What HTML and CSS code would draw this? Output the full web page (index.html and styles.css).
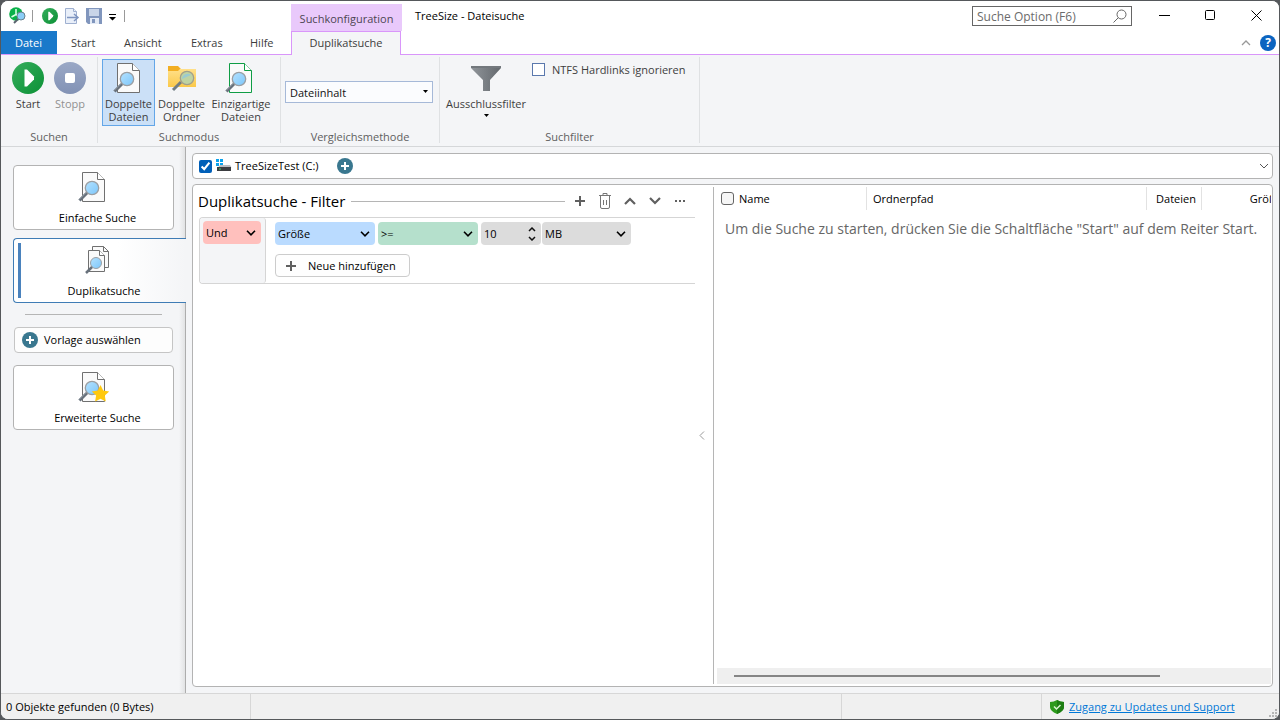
FILE: index.html
```html
<!DOCTYPE html>
<html lang="de">
<head>
<meta charset="utf-8">
<title>TreeSize - Dateisuche</title>
<link rel="stylesheet" href="styles.css">
</head>
<body>
<svg class="defs" aria-hidden="true">
  <defs>
    <linearGradient id="green" x1="0" y1="0" x2="1" y2="1"><stop offset="0" stop-color="#35ad5c"/><stop offset="1" stop-color="#0c9136"/></linearGradient>
    <linearGradient id="slate" x1="0" y1="0" x2="0" y2="1"><stop offset="0" stop-color="#9aa8c6"/><stop offset="1" stop-color="#8292b5"/></linearGradient>
    <linearGradient id="lens" x1="0" y1="0" x2="1" y2="1"><stop offset="0" stop-color="#b4e2ff"/><stop offset="1" stop-color="#7cc6fa"/></linearGradient>
    <linearGradient id="folder" x1="0" y1="0" x2="0" y2="1"><stop offset="0" stop-color="#ffe08a"/><stop offset="1" stop-color="#fbc94a"/></linearGradient>
    <linearGradient id="steel" x1="0" y1="0" x2="1" y2="0"><stop offset="0" stop-color="#90959a"/><stop offset="1" stop-color="#63686d"/></linearGradient>
    <symbol id="play" viewBox="0 0 32 32"><circle cx="16" cy="16" r="16" fill="url(#green)"/><path d="M12.500 7.500h2.500l7 7v3l-7 7h-2.500z" fill="#fff"/></symbol>
    <symbol id="glass" viewBox="0 0 28 32"><path d="M9.500 21.500 1.500 29.500" stroke="#68717b" stroke-width="3"/><path d="M7.500 22 1 28.500" stroke="#9aa3ad" stroke-width="1"/><circle cx="14" cy="17" r="6.700" fill="url(#lens)" stroke="#9b9fa3" stroke-width="1.300"/></symbol>
    <symbol id="page" viewBox="0 0 28 32"><path d="M4.500 1.500h15l7 7v22h-22z" fill="#fafafa" stroke="currentColor"/><path d="M19.500 1.500v7h7" fill="#fff" stroke="currentColor"/></symbol>
    <symbol id="docsearch" viewBox="0 0 28 32"><use href="#page"/><use href="#glass"/></symbol>
    <symbol id="plusdisc" viewBox="0 0 16 16"><circle cx="8" cy="8" r="8" fill="#39778f"/><path d="M8 4v8M4 8h8" stroke="#fff" stroke-width="2"/></symbol>
    <symbol id="chev" viewBox="0 0 10 6"><path d="m1 .8 4 4 4-4" fill="none" stroke="currentColor" stroke-width="1.600"/></symbol>
  </defs>
</svg>
<div class="window">
  <header class="top">
    <div class="quick">
      <svg class="logo" viewBox="0 0 18 18"><circle cx="7" cy="7" r="6.800" fill="#0bb14a"/><path d="M7 2v5.500L2.500 10M7 7.500l3 2" stroke="#d9ffe5" stroke-width="1.600" fill="none"/><path d="m9 12-4 4" stroke="#59636d" stroke-width="2"/><circle cx="12" cy="9" r="4" fill="#8bcdf7" stroke="#69818e"/></svg>
      <i class="bar"></i>
      <button class="icon" aria-label="Suche starten"><svg width="16" height="16"><use href="#play"/></svg></button>
      <button class="icon" aria-label="Exportieren"><svg width="16" height="16" viewBox="0 0 16 16" fill="#e9eff9" stroke="#9fb0d0"><path d="M1.500.5h8l3 3v12h-11z"/><path d="M9.500.5v3h3" /><path d="M3 9.500h10M10 6l4 3.500-4 3.500" fill="none" stroke="#7f95c0" stroke-width="1.500"/></svg></button>
      <button class="icon" aria-label="Speichern"><svg width="16" height="16" viewBox="0 0 16 16"><path d="M0 0h16v16H2l-2-2z" fill="#8196bd"/><path d="M3 1h10v7H3z" fill="#c9d5e8"/><path d="M4 10h9v6H4z" fill="#e4ebf6"/><path d="M6 11h3v4H6z" fill="#8196bd"/></svg></button>
      <button class="icon menu" aria-label="Symbolleiste anpassen"><svg width="7" height="7" viewBox="0 0 7 7"><path d="M0 0h7v1H0zM0 3h7L3.500 6.500z"/></svg></button>
      <i class="bar"></i>
    </div>
    <div class="context">Suchkonfiguration</div>
    <h1>TreeSize - Dateisuche</h1>
    <label class="option"><input type="text" placeholder="Suche Option (F6)" aria-label="Suche Option"><svg width="14" height="14" viewBox="0 0 14 14" fill="none" stroke="#666"><circle cx="8.500" cy="5.500" r="4.500"/><path d="M5.300 8.700.5 13.500"/></svg></label>
    <div class="caption">
      <button class="icon" aria-label="Minimieren"><svg width="11" height="11"><path d="M0 5.500h11" stroke="#000"/></svg></button>
      <button class="icon" aria-label="Maximieren"><svg width="11" height="11"><rect x=".5" y=".5" width="9" height="9" rx="1" fill="none" stroke="#000"/></svg></button>
      <button class="icon" aria-label="Schließen"><svg width="11" height="11"><path d="m.5.5 10 10m0-10-10 10" stroke="#000"/></svg></button>
    </div>
  </header>
  <nav class="tabs">
    <button class="file">Datei</button><button>Start</button><button>Ansicht</button><button>Extras</button><button>Hilfe</button><button class="current">Duplikatsuche</button>
    <div class="help"><button class="icon" aria-label="Menüband reduzieren"><svg width="10" height="6" viewBox="0 0 10 6"><path d="m1 5 4-4 4 4" fill="none" stroke="#999" stroke-width="1.300"/></svg></button><button class="question" aria-label="Hilfe">?</button></div>
  </nav>
  <section class="ribbon">
    <div class="group searching">
      <div class="tools">
        <button class="tool"><svg width="32" height="32"><use href="#play"/></svg>Start</button>
        <button class="tool" disabled><svg width="32" height="32"><circle cx="16" cy="16" r="16" fill="url(#slate)"/><rect x="11" y="11" width="10" height="10" rx="2" fill="#fff"/></svg>Stopp</button>
      </div>
      <h2>Suchen</h2>
    </div>
    <div class="group mode">
      <div class="tools">
        <button class="tool selected"><svg class="doc" width="28" height="32"><use href="#docsearch"/></svg>Doppelte<br>Dateien</button>
        <button class="tool"><svg width="32" height="32" viewBox="0 0 32 32"><path d="M2 4h10l3 3h15v18H2z" fill="#f2ae22"/><path d="M2 9h10l2-2h16v18H2z" fill="url(#folder)"/><path d="m15 20-8 8" stroke="#727d82" stroke-width="3"/><circle cx="21" cy="16" r="6.700" fill="#bfd3a2" stroke="#a1a08c" stroke-width="1.300"/><path d="M16 17a5.500 5.500 0 0 1 9-4z" fill="#9bcbd0"/></svg>Doppelte<br>Ordner</button>
        <button class="tool"><svg class="doc unique" width="28" height="32"><use href="#docsearch"/></svg>Einzigartige<br>Dateien</button>
      </div>
      <h2>Suchmodus</h2>
    </div>
    <div class="group method">
      <div class="pick"><select aria-label="Vergleichsmethode"><option>Dateiinhalt</option></select><svg width="5" height="3"><path d="M0 0h5L2.500 3z"/></svg></div>
      <h2>Vergleichsmethode</h2>
    </div>
    <div class="group filters">
      <div class="tools">
        <button class="tool"><svg width="32" height="32" viewBox="0 0 32 32"><path d="M1 4h30v2L20 18v11h-7V18L1 6z" fill="url(#steel)"/><path d="M1 4h30v2H1z" fill="#73787d"/></svg>Ausschlussfilter<svg class="down" width="5" height="3"><path d="M0 0h5L2.500 3z"/></svg></button>
        <label class="links"><input type="checkbox">NTFS Hardlinks ignorieren</label>
      </div>
      <h2>Suchfilter</h2>
    </div>
  </section>
  <div class="body">
    <aside>
      <button class="card"><svg class="doc" width="28" height="32"><use href="#docsearch"/></svg>Einfache Suche</button>
      <button class="card active"><svg class="doc" width="28" height="32" viewBox="0 0 28 32"><path d="M8.500 2.500h11l5 5v16h-16z" fill="#fafafa" stroke="currentColor"/><path d="M19.500 2.500v5h5" fill="none" stroke="currentColor"/><path d="M4.500 6.500h11l5 5v16h-16z" fill="#fafafa" stroke="currentColor"/><path d="M15.500 6.500v5h5" fill="#fff" stroke="currentColor"/><path d="m9 22-7 7" stroke="#68717b" stroke-width="2.500"/><circle cx="12" cy="19" r="5.500" fill="url(#lens)" stroke="#9b9fa3"/></svg>Duplikatsuche</button>
      <hr>
      <button class="template"><svg width="16" height="16"><use href="#plusdisc"/></svg>Vorlage auswählen</button>
      <button class="card"><svg class="doc starred" width="32" height="32" viewBox="0 0 32 32"><use href="#docsearch" width="28" height="32"/><path d="m22.500 14 2.700 5.500 6 .9-4.400 4.200 1 6-5.300-2.800-5.400 2.800 1-6-4.300-4.200 6-.9z" fill="#ffc90e"/></svg>Erweiterte Suche</button>
    </aside>
    <main>
      <div class="scope">
        <label><input type="checkbox" checked><svg width="16" height="14" viewBox="0 0 16 14"><path d="M0 0h3v3H0zM4 0h3v3H4zM0 4h3v3H0zM4 4h3v3H4z" fill="#0aa2ec"/><path d="M2 8.500 4 6h10l1.500 2.500z" fill="#b9bcc0"/><path d="M1 8h14v4H1z" fill="#3b3d40"/><path d="M3 10h2" stroke="#3fd36a"/></svg>TreeSizeTest (C:)</label>
        <button class="icon" aria-label="Pfad hinzufügen"><svg width="16" height="16"><use href="#plusdisc"/></svg></button>
        <button class="icon expand" aria-label="Pfade anzeigen"><svg width="10" height="6" viewBox="0 0 10 6"><path d="m1 1 4 4 4-4" fill="none" stroke="#555"/></svg></button>
      </div>
      <div class="panel">
        <section class="criteria">
          <div class="heading">
            <h3>Duplikatsuche - Filter</h3><i class="line"></i>
            <button class="icon" aria-label="Hinzufügen"><svg width="10" height="10"><path d="M5 0v10M0 5h10" stroke="#606060" stroke-width="2"/></svg></button>
            <button class="icon" aria-label="Löschen"><svg width="12" height="16" viewBox="0 0 12 16" fill="none" stroke="#777"><path d="M0 2.500h12M4 2V.5h4V2M1.500 3v11q0 1.500 1.500 1.500h6q1.500 0 1.500-1.500V3M4.500 7v5M7.500 7v5"/></svg></button>
            <button class="icon" aria-label="Nach oben"><svg width="12" height="8"><path d="m1 7 5-5 5 5" fill="none" stroke="#606060" stroke-width="2.200"/></svg></button>
            <button class="icon" aria-label="Nach unten"><svg width="12" height="8"><path d="m1 1 5 5 5-5" fill="none" stroke="#606060" stroke-width="2.200"/></svg></button>
            <button class="icon" aria-label="Mehr"><svg width="10" height="2"><path d="M0 0h2v2H0zM4 0h2v2H4zM8 0h2v2H8z" fill="#606060"/></svg></button>
          </div>
          <div class="rules">
            <div class="joiner"><div class="chip red"><select aria-label="Verknüpfung"><option>Und</option></select><svg width="10" height="6"><use href="#chev"/></svg></div></div>
            <div class="conditions">
              <div class="row">
                <div class="chip blue"><select aria-label="Eigenschaft"><option>Größe</option></select><svg width="10" height="6"><use href="#chev"/></svg></div>
                <div class="chip green"><select aria-label="Vergleich"><option>&gt;=</option></select><svg width="10" height="6"><use href="#chev"/></svg></div>
                <div class="chip number"><input type="text" inputmode="numeric" value="10" aria-label="Wert"><svg width="8" height="14" viewBox="0 0 8 14"><path d="m1 4 3-3 3 3M1 10l3 3 3-3" fill="none" stroke="#111" stroke-width="1.500"/></svg></div>
                <div class="chip unit"><select aria-label="Einheit"><option>MB</option></select><svg width="10" height="6"><use href="#chev"/></svg></div>
              </div>
              <button class="add"><svg width="10" height="10"><path d="M5 0v10M0 5h10" stroke="#606060" stroke-width="2"/></svg>Neue hinzufügen</button>
            </div>
          </div>
        </section>
        <button class="icon collapse" aria-label="Filter einklappen"><svg width="6" height="9"><path d="M5 .5 1 4.500l4 4" fill="none" stroke="#999"/></svg></button>
        <section class="results">
          <table>
            <colgroup><col class="c-name"><col><col class="c-files"><col class="c-size"></colgroup>
            <thead><tr><th><label><input type="checkbox">Name</label></th><th>Ordnerpfad</th><th class="num">Dateien</th><th class="num">Größe</th></tr></thead>
          </table>
          <p>Um die Suche zu starten, drücken Sie die Schaltfläche "Start" auf dem Reiter Start.</p>
          <div class="scroll"><i></i></div>
        </section>
      </div>
    </main>
  </div>
  <footer>
    <span class="count">0 Objekte gefunden (0 Bytes)</span><span class="space"></span>
    <span class="support"><svg width="14" height="14" viewBox="0 0 14 14"><path d="M7 0q3 2 7 2v5q0 4-7 7-7-3-7-7V2q4 0 7-2z" fill="#2d9a1c"/><path d="M7 0q3 2 7 2v5q0 4-7 7z" fill="#1d7d12"/><path d="m4 6.500 2.500 2.500L10.500 5" fill="none" stroke="#d9f4d2" stroke-width="1.500"/></svg><a href="#">Zugang zu Updates und Support</a></span>
    <svg class="grip" width="9" height="9"><path d="M6 0h2v2H6zM3 3h2v2H3zM6 3h2v2H6zM0 6h2v2H0zM3 6h2v2H3zM6 6h2v2H6z" fill="#b5b5b5"/></svg>
  </footer>
</div>
</body>
</html>
```
FILE: styles.css
```css
* { box-sizing: border-box; }
body { margin: 0; background: #55585b; font: 11px/13px "Open Sans", "Noto Sans", sans-serif; color: #000; }
button, input, select { font: inherit; color: inherit; margin: 0; }
button { padding: 0; border: 0; background: none; white-space: nowrap; }
svg { flex: none; display: block; }
h1, h2, h3, p { margin: 0; font-weight: normal; }
.defs { position: absolute; width: 0; height: 0; }
.icon { display: flex; align-items: center; justify-content: center; }
.window { display: flex; flex-direction: column; height: 100vh; border: 1px solid #55585b; border-radius: 8px; background: #f4f5f7; overflow: hidden; }

.top { display: flex; height: 30px; background: #fff; }
.quick { display: flex; align-items: center; width: 290px; padding-left: 8px; }
.logo { width: 18px; height: 18px; margin-right: 5px; }
.bar { width: 1px; height: 12px; background: #999; }
.quick .icon { margin-left: 6px; }
.quick .bar + .icon { margin-left: 9px; }
.quick .menu { margin-left: 7px; padding-top: 2px; }
.quick .menu + .bar { margin-left: 8px; }
.context { width: 111px; margin-top: 3px; padding-top: 8px; background: #e9c9fb; color: #4c4652; text-align: center; }
h1 { margin-left: 13px; font-size: 11px; line-height: 30px; }
.option { display: flex; align-items: center; align-self: flex-start; width: 160px; height: 20px; margin: 5px 9px 0 auto; padding: 0 4px; border: 1px solid #666; }
.option input { flex: 1; min-width: 0; padding: 0; border: 0; outline: 0; font-size: 12px; }
.option input::placeholder { color: #6b6b6b; opacity: 1; }
.caption { display: flex; }
.caption .icon { width: 46px; height: 29px; }

.tabs { display: flex; height: 24px; background: #fff; border-bottom: 1px solid #d996fa; color: #3c3c3c; }
.tabs > button { padding: 0 0 0 14px; text-align: left; }
.tabs > .file { width: 56px; background: #1979ca; color: #fff; }
.tabs > button:nth-child(2) { width: 53px; }
.tabs > button:nth-child(3) { width: 67px; }
.tabs > button:nth-child(4) { width: 59px; }
.tabs > button:nth-child(5) { width: 55px; }
.tabs > .current { width: 110px; height: 24px; padding: 0 0 2px; border: 1px solid #d996fa; border-bottom: 0; background: #f4f5f7; text-align: center; }
.help { display: flex; align-items: center; gap: 9px; margin-left: auto; padding-right: 3px; }
.question { width: 16px; height: 16px; border-radius: 50%; background: #0b64c0; color: #fff; font-size: 12px; font-weight: bold; line-height: 16px; }

.ribbon { display: flex; flex: none; height: 92px; padding: 2px 0 3px; border-bottom: 1px solid #d5d7d9; color: #3e3e3e; }
.group { display: flex; flex-direction: column; border-right: 1px solid #dfe1e3; }
.group h2 { margin-top: auto; font-size: 11px; line-height: 13px; text-align: center; color: #606060; }
.searching { width: 97px; }
.mode { width: 183px; }
.method { width: 159px; }
.filters { width: 260px; }
.tools { display: flex; }
.tool { display: flex; flex-direction: column; align-items: center; height: 67px; margin-top: 2px; padding-top: 2px; border: 1px solid transparent; }
.tool svg { margin-bottom: 3px; }
.searching .tool { width: 42px; }
.searching .tools { padding-left: 6px; }
.tool:disabled { color: #919191; }
.mode .tools { padding-left: 4px; }
.mode .tool { width: 53px; }
.mode .tool:last-child { width: 66px; }
.mode .selected { border-color: #63a6e8; background: #cbe0f7; }
.tool .doc { margin-right: 4px; }
.doc { color: #707070; }
.tool .unique { color: #0f9d45; }
.pick { position: relative; display: flex; margin: 24px 6px 0 4px; }
.pick select { flex: 1; height: 22px; padding: 0 4px; appearance: none; border: 1px solid #a6b9d8; border-radius: 0; background: #fbfcfe; color: #111; }
.pick svg { position: absolute; right: 5px; top: 9px; pointer-events: none; }
.filters .tool { width: 92px; }
.filters .tool .down { margin-top: 4px; }
.links { display: flex; align-items: center; align-self: flex-start; gap: 7px; margin-top: 6px; white-space: nowrap; }
.links input { width: 13px; height: 13px; appearance: none; border: 1px solid #5a78ad; background: #fff; }

.body { display: flex; flex: 1; min-height: 0; line-height: 16px; }
aside { display: flex; flex: none; flex-direction: column; width: 185px; padding: 18px 11px 0 12px; border-right: 1px solid #adadad; background: linear-gradient(to left, #e2e3e4, #f4f5f7 6px); }
.card { display: flex; flex: none; flex-direction: column; align-items: center; justify-content: center; gap: 7px; height: 65px; margin-bottom: 8px; padding: 2px 0 0 8px; border: 1px solid #b3b3b3; border-radius: 4px; background: #fff; }
.card svg { margin-right: 12px; }
.card .starred { margin-right: 8px; }
.active { margin-right: -12px; border-color: #3f7cb5; border-right: 0; border-radius: 4px 0 0 4px; background: linear-gradient(#4a82bd, #4a82bd) 4px 4px / 3px 55px no-repeat, linear-gradient(to right, #fff 60%, #f4f5f7); }
hr { width: 137px; margin: 3px 0 12px 12px; border: 0; border-top: 1px solid #b5b5b5; }
.template { display: flex; flex: none; align-items: center; gap: 6px; height: 26px; margin: 0 1px 12px; padding-left: 7px; border: 1px solid #c5c5c5; border-radius: 4px; background: #fdfdfd; }
main { display: flex; flex: 1; flex-direction: column; gap: 5px; min-width: 0; padding: 6px 6px; }
.scope, .panel { border: 1px solid #b3b3b3; border-radius: 4px; background: #fff; }
.scope { display: flex; flex: none; align-items: center; height: 26px; padding: 0 3px 0 6px; }
.scope label { display: flex; align-items: center; }
.scope input { width: 13px; height: 13px; margin-right: 4px; accent-color: #005fb8; }
.scope label svg { margin-right: 3px; }
.scope .icon { margin-left: 18px; }
.scope .expand { margin-left: auto; }

.panel { display: flex; flex: 1; min-height: 0; padding: 2px 1px; overflow: hidden; }
.criteria { flex: none; width: 501px; padding-left: 4px; }
.heading { display: flex; align-items: center; height: 30px; padding-bottom: 2px; }
.heading h3 { font-size: 15px; line-height: 20px; white-space: nowrap; }
.line { flex: 1; height: 1px; margin: 0 2px 0 6px; background: #b5b5b5; }
.heading .icon { width: 25px; height: 24px; }
.heading .icon:last-child { margin-right: 3px; }
.rules { display: flex; height: 67px; margin-left: 1px; border: 1px solid #d5d5d5; border-right: 0; border-radius: 4px 0 0 4px; }
.joiner { width: 66px; padding: 3px; border-right: 1px solid #d5d5d5; border-radius: 3px; background: #f4f5f7; }
.conditions { padding: 4px 9px; }
.row { display: flex; gap: 3px; margin-bottom: 9px; }
.chip { position: relative; height: 23px; border-radius: 4px; }
.chip select, .chip input { display: block; width: 100%; height: 100%; padding: 0 3px; appearance: none; border: 0; border-radius: 4px; background: none; }
.chip svg { position: absolute; right: 5px; top: 9px; pointer-events: none; }
.red { width: 58px; background: #ffc0bd; }
.blue { width: 100px; background: #badbff; }
.green { width: 100px; background: #b5e0cc; }
.number { width: 60px; background: #dcdcdc; }
.unit { width: 89px; margin-left: -2px; background: #dcdcdc; }
.number svg { top: 5px; }
.add { display: flex; align-items: center; gap: 12px; width: 135px; height: 23px; padding-left: 10px; border: 1px solid #ccc; border-radius: 4px; background: #fefefe; }
.collapse { flex: none; width: 18px; padding-right: 4px; }
.results { display: flex; flex: 1; flex-direction: column; min-width: 0; padding-left: 3px; border-left: 1px solid #b5b5b5; overflow: hidden; }
table { width: calc(100% + 17px); table-layout: fixed; border-spacing: 0; }
.c-name { width: 150px; }
.c-files { width: 55px; }
.c-size { width: 86px; }
th { height: 23px; padding: 0 6px; border-right: 1px solid #e2e2e2; font-weight: normal; text-align: left; }
th:first-child { padding-left: 4px; }
th.num { padding: 0 5px; text-align: right; }
th label { display: flex; align-items: center; gap: 5px; }
th input { width: 13px; height: 13px; appearance: none; border: 1px solid #666; border-radius: 3px; background: #f6f6f6; }
.results p { padding: 9px 0 0 8px; font-size: 14px; line-height: 20px; color: #666; white-space: nowrap; }
.scroll { height: 16px; margin-top: auto; padding: 7px 17px; background: #efefef; }
.scroll i { display: block; width: 82%; height: 2px; background: #858585; }

footer { display: flex; flex: none; height: 26px; border-top: 1px solid #d7d7d7; background: #f0f0f0; line-height: 26px; position: relative; }
.count { width: 250px; padding-left: 5px; border-right: 1px solid #d7d7d7; }
.space { flex: 1; border-right: 1px solid #d7d7d7; margin-right: 199px; }
.support { display: flex; align-items: center; gap: 5px; width: 238px; padding-left: 8px; border-left: 1px solid #d7d7d7; white-space: nowrap; }
footer a { color: #0078d7; }
.grip { position: absolute; right: 1px; bottom: 1px; }
```
